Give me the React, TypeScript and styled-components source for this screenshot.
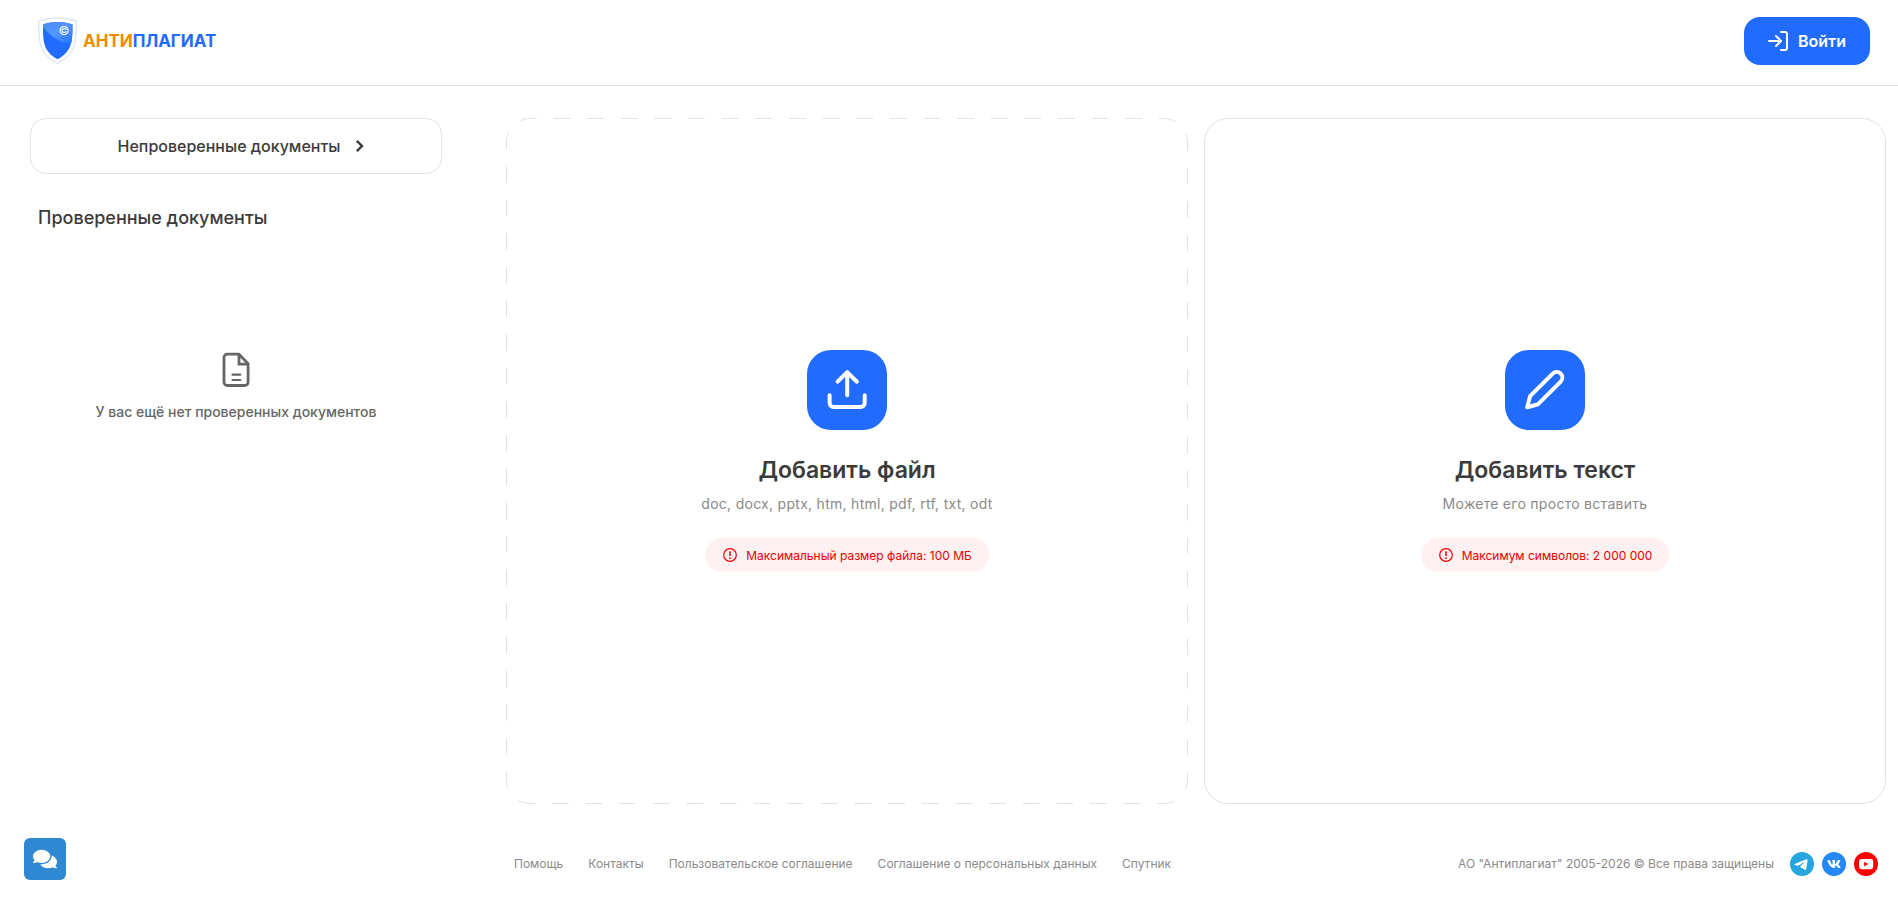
import React from "react";
import styled, { createGlobalStyle } from "styled-components";
import { LogIn } from "lucide-react";
import { FaComments, FaVk } from "react-icons/fa";

const blue = "#216bff";
const line = "#e2e2e2";
const ink = "#3b3b3b";
const muted = "#8a8a8a";

const GlobalStyle = createGlobalStyle`
  *, *::before, *::after { box-sizing: border-box; }
  body {
    margin: 0;
    background: #fff;
    color: ${ink};
    font-family: Inter, "Liberation Sans", sans-serif;
  }
  button, a { font: inherit; color: inherit; }
  h1, h2, p { margin: 0; }
`;

const Page = styled.div`
  min-height: 100vh;
  display: flex;
  flex-direction: column;
`;

const Header = styled.header`
  display: flex;
  align-items: center;
  justify-content: space-between;
  height: 86px;
  padding: 0 28px 4px 38px;
  border-bottom: 1px solid ${line};
`;

const Logo = styled.a`
  display: flex;
  align-items: center;
  gap: 6px;
  text-decoration: none;
`;

const Wordmark = styled.span`
  font-size: 17px;
  line-height: 24px;
  font-weight: 700;
  color: ${blue};
`;

const WordmarkAccent = styled.span`
  color: #f08c00;
`;

const LoginButton = styled.button`
  display: flex;
  align-items: center;
  gap: 8px;
  height: 48px;
  padding: 0 24px 0 22px;
  border: 0;
  border-radius: 16px;
  background: ${blue};
  color: #fff;
  font-size: 16px;
  font-weight: 600;
  cursor: pointer;
`;

const Body = styled.div`
  flex: 1;
  display: grid;
  grid-template-columns: 412px 1fr;
  gap: 64px;
  padding: 32px 12px 0 30px;
`;

const Sidebar = styled.aside`
  display: flex;
  flex-direction: column;
`;

const UncheckedButton = styled.button`
  display: flex;
  align-items: center;
  justify-content: center;
  gap: 8px;
  height: 56px;
  padding: 0 0 0 18px;
  border: 1px solid ${line};
  border-radius: 16px;
  background: #fff;
  font-size: 16px;
  font-weight: 500;
  cursor: pointer;
`;

const SidebarTitle = styled.h2`
  margin-top: 32px;
  padding-left: 8px;
  font-size: 18px;
  line-height: 24px;
  font-weight: 500;
`;

const EmptyState = styled.div`
  display: flex;
  flex-direction: column;
  align-items: center;
  gap: 12px;
  margin-top: 120px;
  color: #666;
  font-size: 14px;
  line-height: 20px;
  font-weight: 500;
`;

const Content = styled.div`
  display: flex;
  flex-direction: column;
`;

const Cards = styled.main`
  flex: 1;
  display: grid;
  grid-template-columns: 1fr 1fr;
  gap: 16px;
`;

const Card = styled.button<{ $dashed?: boolean }>`
  position: relative;
  display: flex;
  flex-direction: column;
  align-items: center;
  justify-content: center;
  padding: 24px;
  border: 1px solid ${(p) => (p.$dashed ? "transparent" : line)};
  border-radius: 24px;
  background: #fff;
  cursor: pointer;
`;

const DashedFrame = styled.svg`
  position: absolute;
  inset: -1px;
  width: calc(100% + 2px);
  height: calc(100% + 2px);
  overflow: visible;
  pointer-events: none;

  rect {
    width: calc(100% - 1px);
    height: calc(100% - 1px);
  }
`;

const CardIcon = styled.span`
  display: flex;
  width: 80px;
  height: 80px;
  border-radius: 24px;
  background: ${blue};
`;

const CardTitle = styled.span`
  margin-top: 24px;
  font-size: 23px;
  line-height: 32px;
  font-weight: 600;
`;

const CardHint = styled.span`
  margin-top: 8px;
  font-size: 14px;
  line-height: 20px;
  letter-spacing: 0.02em;
  color: ${muted};
`;

const Limit = styled.span`
  display: flex;
  align-items: center;
  gap: 8px;
  height: 34px;
  margin-top: 24px;
  padding: 0 17px;
  border-radius: 17px;
  background: #fff0f1;
  color: #eb0000;
  font-size: 12px;
`;

const Footer = styled.footer`
  display: flex;
  align-items: center;
  justify-content: space-between;
  padding: 48px 8px 23px;
  color: ${muted};
  font-size: 12px;
  line-height: 24px;
`;

const FooterLinks = styled.nav`
  display: flex;
  gap: 25px;

  a { text-decoration: none; }
`;

const FooterInfo = styled.div`
  display: flex;
  align-items: center;
  gap: 16px;
`;

const Socials = styled.div`
  display: flex;
  gap: 8px;
`;

const SocialLink = styled.a<{ $color: string }>`
  display: flex;
  align-items: center;
  justify-content: center;
  width: 24px;
  height: 24px;
  border-radius: 50%;
  background: ${(p) => p.$color};
  color: #fff;
`;

const ChatButton = styled.button`
  position: fixed;
  left: 24px;
  bottom: 19px;
  display: flex;
  align-items: center;
  justify-content: center;
  width: 42px;
  height: 42px;
  padding: 0;
  border: 0;
  border-radius: 6px;
  background: #3087d2;
  color: #fff;
  cursor: pointer;
`;

const ShieldLogo = () => (
  <svg width="39" height="47" viewBox="0 0 39 47" aria-hidden="true">
    <defs>
      <linearGradient id="shine" x1="0" y1="0" x2="1" y2="1">
        <stop offset="0" stopColor="#4a8bff" />
        <stop offset="0.5" stopColor="#5595ff" />
        <stop offset="1" stopColor="#1f74ff" />
      </linearGradient>
      <clipPath id="shield">
        <path d="M5 7.3Q19.5 2.8 34.4 7.3C34.6 22 34.8 34.5 19.5 42.2C4.4 34.5 5 22 5 7.3Z" />
      </clipPath>
    </defs>
    <path
      d="M.8 4Q19.5-2 38.2 4C38.6 21 38.8 38 19.5 46.3C.2 38 .4 21 .8 4Z"
      fill="#fff"
      stroke="#dae8f6"
      strokeWidth="1.4"
    />
    <g clipPath="url(#shield)">
      <rect width="39" height="47" fill={blue} />
      <path d="M4 8C12 20 22 26 35 27.500V3H4Z" fill="url(#shine)" />
    </g>
    <text x="26" y="17.500" textAnchor="middle" fontSize="12" fill="#fff">©</text>
  </svg>
);

const ChevronIcon = () => (
  <svg width="24" height="24" viewBox="0 0 24 24" fill="none" stroke="currentColor" strokeWidth="2.400" aria-hidden="true">
    <path d="M8.800 6.800 14 12 8.800 17.200" />
  </svg>
);

const DocumentIcon = () => (
  <svg width="40" height="40" viewBox="0 0 40 40" fill="none" stroke="currentColor" strokeWidth="2.800" strokeLinejoin="round" aria-hidden="true">
    <path d="M23 4.200H11.300a3.300 3.300 0 0 0-3.300 3.300v24.700a3.300 3.300 0 0 0 3.300 3.300h17.500a3.300 3.300 0 0 0 3.300-3.300V13.800Z" />
    <path d="M23 4.200V14.200H32.100" strokeLinejoin="miter" />
    <path d="M16.500 24.700h7.800M16.500 30h7.800" strokeWidth="2.200" strokeLinecap="round" />
  </svg>
);

const UploadIcon = () => (
  <svg width="80" height="80" viewBox="0 0 80 80" fill="none" stroke="#fff" strokeWidth="4" strokeLinecap="round" strokeLinejoin="round" aria-hidden="true">
    <path d="M22.600 45.300V53a4 4 0 0 0 4 4h27.100a4 4 0 0 0 4-4v-7.700M40.200 45.200V22.200M30.600 31.700l9.600-9.500 9.700 9.500" />
  </svg>
);

const PencilIcon = () => (
  <svg width="80" height="80" viewBox="0 0 80 80" fill="none" stroke="#fff" strokeWidth="4" strokeLinejoin="round" aria-hidden="true">
    <path d="M22.200 57.200 25.100 46.200 47.700 23.600a5.650 5.650 0 0 1 8 8L33.100 54.200Z" />
  </svg>
);

const WarningIcon = () => (
  <svg width="16" height="16" viewBox="0 0 16 16" fill="none" stroke="currentColor" strokeWidth="1.200" aria-hidden="true">
    <circle cx="8" cy="8" r="6.300" />
    <path d="M8 4.200V9" strokeWidth="1.500" />
    <circle cx="8" cy="11.200" r=".9" fill="currentColor" stroke="none" />
  </svg>
);

const TelegramIcon = () => (
  <svg width="24" height="24" viewBox="0 0 24 24" fill="currentColor" aria-hidden="true">
    <path d="M16.906 7.224c.1-.002.321.023.465.14a.506.506 0 0 1 .171.325c.016.093.036.306.02.472-.18 1.898-.962 6.502-1.360 8.627-.168.9-.499 1.201-.82 1.230-.696.065-1.225-.46-1.900-.902-1.056-.693-1.653-1.124-2.678-1.800-1.185-.78-.417-1.210.258-1.910.177-.184 3.247-2.977 3.307-3.230.007-.032.014-.15-.056-.212s-.174-.041-.249-.024c-.106.024-1.793 1.140-5.061 3.345-.48.33-.913.49-1.302.48-.428-.008-1.252-.241-1.865-.44-.752-.245-1.349-.374-1.297-.789.027-.216.325-.437.893-.663 3.498-1.524 5.830-2.529 6.998-3.014 3.332-1.386 4.025-1.627 4.476-1.635z" />
  </svg>
);

const YoutubeIcon = () => (
  <svg width="24" height="24" viewBox="0 0 24 24" aria-hidden="true">
    <rect x="5" y="7" width="14.200" height="10.200" rx="2.400" fill="#fff" />
    <path d="M10.200 9.800v4.600l4.100-2.300Z" fill="#f00" />
  </svg>
);

const links = [
  "Помощь",
  "Контакты",
  "Пользовательское соглашение",
  "Соглашение о персональных данных",
  "Спутник",
];

export default function App() {
  return (
    <Page>
      <GlobalStyle />
      <Header>
        <Logo href="#">
          <ShieldLogo />
          <Wordmark>
            <WordmarkAccent>АНТИ</WordmarkAccent>ПЛАГИАТ
          </Wordmark>
        </Logo>
        <LoginButton type="button">
          <LogIn size={24} aria-hidden="true" />
          Войти
        </LoginButton>
      </Header>
      <Body>
        <Sidebar>
          <UncheckedButton type="button">
            Непроверенные документы
            <ChevronIcon />
          </UncheckedButton>
          <SidebarTitle>Проверенные документы</SidebarTitle>
          <EmptyState>
            <DocumentIcon />
            <p>У вас ещё нет проверенных документов</p>
          </EmptyState>
        </Sidebar>
        <Content>
          <Cards>
            <Card type="button" $dashed>
              <DashedFrame aria-hidden="true">
                <rect
                  x="0.500"
                  y="0.500"
                  rx="23.500"
                  fill="none"
                  stroke={line}
                  pathLength={800}
                  strokeDasharray="5 5"
                  strokeDashoffset="3"
                />
              </DashedFrame>
              <CardIcon><UploadIcon /></CardIcon>
              <CardTitle>Добавить файл</CardTitle>
              <CardHint>doc, docx, pptx, htm, html, pdf, rtf, txt, odt</CardHint>
              <Limit><WarningIcon />Максимальный размер файла: 100 МБ</Limit>
            </Card>
            <Card type="button">
              <CardIcon><PencilIcon /></CardIcon>
              <CardTitle>Добавить текст</CardTitle>
              <CardHint>Можете его просто вставить</CardHint>
              <Limit><WarningIcon />Максимум символов: 2 000 000</Limit>
            </Card>
          </Cards>
          <Footer>
            <FooterLinks>
              {links.map((label) => (
                <a key={label} href="#">{label}</a>
              ))}
            </FooterLinks>
            <FooterInfo>
              <span>АО "Антиплагиат" 2005-2026 © Все права защищены</span>
              <Socials>
                <SocialLink href="#" aria-label="Telegram" $color="#27a5e1"><TelegramIcon /></SocialLink>
                <SocialLink href="#" aria-label="ВКонтакте" $color="#2688f7"><FaVk size={14} /></SocialLink>
                <SocialLink href="#" aria-label="YouTube" $color="#ff0000"><YoutubeIcon /></SocialLink>
              </Socials>
            </FooterInfo>
          </Footer>
        </Content>
      </Body>
      <ChatButton type="button" aria-label="Чат">
        <FaComments size={24} />
      </ChatButton>
    </Page>
  );
}
